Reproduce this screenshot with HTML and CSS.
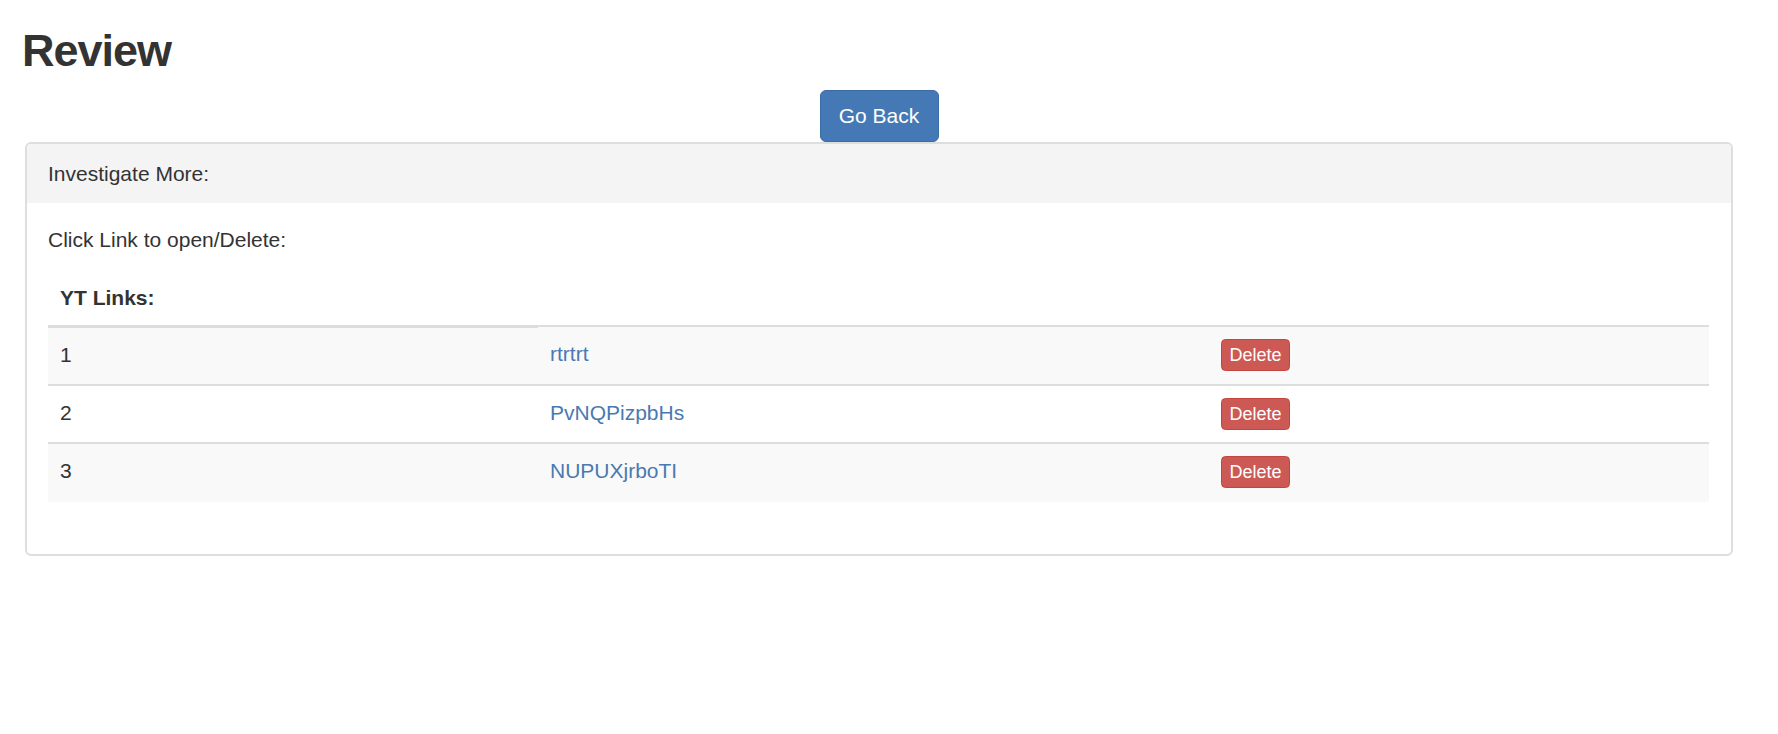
FILE: index.html
```html
<!DOCTYPE html>
<html lang="en">
<head>
<meta charset="utf-8">
<title>Review</title>
<link rel="stylesheet" href="styles.css">
</head>
<body>
<div class="container">
  <h2 class="page-title">Review</h2>
  <div class="actions">
    <button class="btn btn-primary" type="button">Go Back</button>
  </div>
  <div class="panel">
    <div class="panel-heading">Investigate More:</div>
    <div class="panel-body">
      <p class="intro">Click Link to open/Delete:</p>
      <table class="table">
        <colgroup>
          <col class="col-num">
          <col class="col-link">
          <col class="col-action">
        </colgroup>
        <thead>
          <tr><th>YT Links:</th></tr>
        </thead>
        <tbody>
          <tr class="odd">
            <td>1</td>
            <td><a class="link" href="#">rtrtrt</a></td>
            <td><button class="btn-delete" type="button">Delete</button></td>
          </tr>
          <tr>
            <td>2</td>
            <td><a class="link" href="#">PvNQPizpbHs</a></td>
            <td><button class="btn-delete" type="button">Delete</button></td>
          </tr>
          <tr class="odd">
            <td>3</td>
            <td><a class="link" href="#">NUPUXjrboTI</a></td>
            <td><button class="btn-delete" type="button">Delete</button></td>
          </tr>
        </tbody>
      </table>
    </div>
  </div>
</div>
</body>
</html>
```

FILE: styles.css
```css
* { box-sizing: border-box; }

html, body {
  margin: 0;
  padding: 0;
  background: #ffffff;
}

body {
  font-family: "Liberation Sans", Arial, Helvetica, sans-serif;
  font-size: 21px;
  line-height: 30px;
  color: #333333;
}

.container {
  padding: 0 45px 0 25px;
}

.page-title {
  margin: 26px 0 14px -3px;
  font-size: 45px;
  line-height: 49.5px;
  font-weight: 700;
  letter-spacing: -1px;
  color: #333333;
}

.actions {
  display: flex;
  justify-content: center;
}

.btn {
  font-family: inherit;
  font-size: 21px;
  line-height: 30px;
  padding: 9px 18px;
  border-radius: 6px;
  border: 1px solid transparent;
  cursor: pointer;
}

.btn-primary {
  background: #4479b5;
  border-color: #3a6ca6;
  color: #ffffff;
  height: 52px;
  width: 119px;
}

.panel {
  border: 2px solid #dedede;
  border-radius: 6px;
  background: #ffffff;
  overflow: hidden;
}

.panel-heading {
  background: #f4f4f4;
  padding: 15px 21px;
  height: 59px;
  color: #333333;
}

.panel-body {
  padding: 22px 22px 22px 21px;
}

.intro {
  margin: 0 0 15px;
}

.table {
  width: 100%;
  border-collapse: collapse;
  table-layout: fixed;
  margin-bottom: 30px;
}

.col-num { width: 490px; }
.col-link { width: 671px; }

.table th {
  text-align: left;
  font-weight: 700;
  padding: 13px 12px 12px;
  line-height: 30px;
  border-bottom: 3px solid #dddddd;
}

.table td {
  padding: 12px 12px;
  line-height: 30px;
  height: 58.5px;
  vertical-align: top;
  border-top: 2px solid #dddddd;
}

.table tbody tr.odd td {
  background: #f9f9f9;
}

.link {
  color: #4a79b1;
  text-decoration: none;
}

.btn-delete {
  display: inline-block;
  font-family: inherit;
  font-size: 18px;
  line-height: 26px;
  padding: 2px 7px;
  height: 32px;
  width: 69px;
  border: 1px solid #c4453f;
  border-radius: 4.5px;
  background: #cd5954;
  color: #ffffff;
  vertical-align: top;
  cursor: pointer;
}
```
